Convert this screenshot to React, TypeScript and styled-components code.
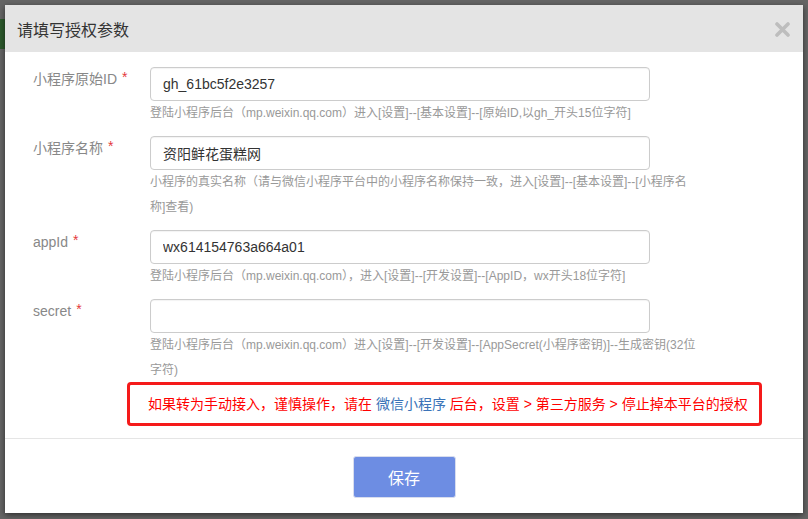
import React from "react";
import styled, { createGlobalStyle } from "styled-components";

const GlobalStyle = createGlobalStyle`
  html, body {
    margin: 0;
    padding: 0;
    background: #656565;
  }
  body {
    font-family: "Liberation Sans", "Noto Sans CJK SC", sans-serif;
  }
`;

type Field = {
  label: string;
  value: string;
  help: string[];
};

const fields: Field[] = [
  {
    label: "小程序原始ID",
    value: "gh_61bc5f2e3257",
    help: ["登陆小程序后台（mp.weixin.qq.com）进入[设置]--[基本设置]--[原始ID,以gh_开头15位字符]"],
  },
  {
    label: "小程序名称",
    value: "资阳鲜花蛋糕网",
    help: [
      "小程序的真实名称（请与微信小程序平台中的小程序名称保持一致，进入[设置]--[基本设置]--[小程序名",
      "称]查看)",
    ],
  },
  {
    label: "appId",
    value: "wx614154763a664a01",
    help: ["登陆小程序后台（mp.weixin.qq.com），进入[设置]--[开发设置]--[AppID，wx开头18位字符]"],
  },
  {
    label: "secret",
    value: "",
    help: [
      "登陆小程序后台（mp.weixin.qq.com）进入[设置]--[开发设置]--[AppSecret(小程序密钥)]--生成密钥(32位",
      "字符)",
    ],
  },
];

const App = () => (
  <Page>
    <GlobalStyle />
    <BehindTab />
    <Overlay>
      <Modal>
        <Header>
          <Title>请填写授权参数</Title>
          <CloseButton aria-label="close">
            <svg width="15" height="15" viewBox="0 0 15 15">
              <path d="M2 2 L13 13 M13 2 L2 13" stroke="#bdbdbd" strokeWidth="3.6" strokeLinecap="round" />
            </svg>
          </CloseButton>
        </Header>
        <Body>
          {fields.map((f) => (
            <Row key={f.label}>
              <Label>
                {f.label}
                <Star>*</Star>
              </Label>
              <Control>
                <Input defaultValue={f.value} />
                <Help>
                  {f.help.map((line, i) => (
                    <React.Fragment key={i}>
                      {i > 0 && <br />}
                      {line}
                    </React.Fragment>
                  ))}
                </Help>
              </Control>
            </Row>
          ))}
          <Warning>
            如果转为手动接入，谨慎操作，请在 <WarnLink>微信小程序</WarnLink> 后台，设置 &gt; 第三方服务 &gt; 停止掉本平台的授权
          </Warning>
        </Body>
        <Footer>
          <SaveButton>保存</SaveButton>
        </Footer>
      </Modal>
    </Overlay>
  </Page>
);

const Page = styled.div`
  position: relative;
  width: 808px;
  height: 519px;
  overflow: hidden;
  background: #656565;
`;

const BehindTab = styled.div`
  position: absolute;
  left: 0;
  top: 19px;
  width: 5px;
  height: 30px;
  background: #2d5a2d;
`;

const Overlay = styled.div`
  position: absolute;
  inset: 0;
  padding: 5px;
  box-sizing: border-box;
`;

const Modal = styled.div`
  display: flex;
  flex-direction: column;
  width: 798px;
  height: 508px;
  background: #fff;
  box-shadow: 0 2px 6px rgba(0, 0, 0, 0.55);
`;

const Header = styled.div`
  display: flex;
  align-items: center;
  justify-content: space-between;
  height: 47px;
  padding: 0 13px 0 12px;
  background: #e4e4e4;
`;

const Title = styled.div`
  font-size: 16px;
  color: #333;
`;

const CloseButton = styled.div`
  display: flex;
  align-items: center;
  justify-content: center;
  width: 15px;
  height: 15px;
  margin-top: 2px;
`;

const Body = styled.div`
  flex: 1;
  padding: 15px 0 0 28px;
  border-bottom: 1px solid #e5e5e5;
`;

const Row = styled.div`
  display: flex;
  margin-bottom: 10px;
`;

const Label = styled.div`
  width: 117px;
  padding-top: 0;
  font-size: 14px;
  line-height: 20px;
  color: #888;
`;

const Star = styled.span`
  margin-left: 5px;
  color: #e4393c;
  font-size: 14px;
  vertical-align: 2px;
`;

const Control = styled.div`
  display: flex;
  flex-direction: column;
`;

const Input = styled.input`
  box-sizing: border-box;
  width: 500px;
  height: 34px;
  padding: 0 12px;
  border: 1px solid #ccc;
  border-radius: 4px;
  box-shadow: inset 0 1px 1px rgba(0, 0, 0, 0.05);
  font-family: "Liberation Sans", "Noto Sans CJK SC", sans-serif;
  font-size: 14px;
  color: #333;
  outline: none;
`;

const Help = styled.div`
  width: 570px;
  font-size: 12px;
  line-height: 25px;
  color: #999;
  white-space: nowrap;
`;

const Warning = styled.div`
  box-sizing: border-box;
  width: 635px;
  height: 44px;
  margin: -11px 0 0 94px;
  padding-left: 18px;
  border: 3px solid #f51a1a;
  border-radius: 4px;
  font-size: 14px;
  line-height: 38px;
  color: #f00;
  white-space: nowrap;
`;

const WarnLink = styled.span`
  color: #3a73b8;
`;

const Footer = styled.div`
  display: flex;
  justify-content: center;
  padding: 17px 0 15px;
`;

const SaveButton = styled.button`
  width: 103px;
  height: 42px;
  border: 1px solid #d8ddee;
  border-radius: 3px;
  background: #6d8de3;
  color: #fff;
  font-family: "Liberation Sans", "Noto Sans CJK SC", sans-serif;
  font-size: 16px;
  cursor: pointer;
`;

export default App;
